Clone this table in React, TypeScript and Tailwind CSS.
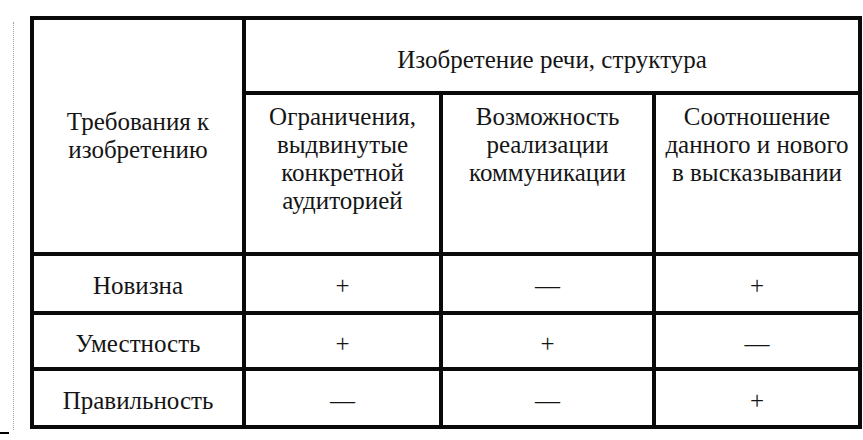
import {FC, ReactNode, Fragment} from "react";

const Cell: FC<{ className?: string; children?: ReactNode }> = ({className = "", children}) => (
    <div className={`bg-white flex justify-center text-center ${className}`}>{children}</div>
);

const rows = [
    {name: "Новизна", values: ["+", "—", "+"]},
    {name: "Уместность", values: ["+", "+", "—"]},
    {name: "Правильность", values: ["—", "—", "+"]},
];

export default function App() {
    return (
        <div
            className="w-[863px] h-[440px] bg-white flex text-[#151515] text-[25px] leading-[28px] font-['Liberation_Serif','Times_New_Roman',serif]">
            {/* left margin marks */}
            <div className="w-[30px] flex flex-col pt-[22px] pb-[6px]">
                <div className="flex-1 ml-[13px] border-l border-dotted border-gray-400"/>
                <div className="h-[2px] w-[9px] bg-black mt-[2px]"/>
            </div>

            {/* table */}
            <div className="mt-[16px] self-start">
                <div
                    className="grid bg-[#0a0a0a] p-[4px] gap-[4px] grid-cols-[208px_193px_209px_202px] grid-rows-[71px_157px_55px_52px_54px]">
                    <Cell className="row-span-2 items-center">
                        <div>Требования к<br/>изобретению</div>
                    </Cell>
                    <Cell className="col-span-3 items-center pt-[9px]">Изобретение речи, структура</Cell>
                    <Cell className="pt-[8px]">
                        <div>Ограничения,<br/>выдвинутые<br/>конкретной<br/>аудиторией</div>
                    </Cell>
                    <Cell className="pt-[8px]">
                        <div>Возможность<br/>реализации<br/>коммуникации</div>
                    </Cell>
                    <Cell className="pt-[8px]">
                        <div>Соотношение<br/>данного и нового<br/>в высказывании</div>
                    </Cell>
                    {rows.map((r) => (
                        <Fragment key={r.name}>
                            <Cell className="items-center pt-[5px]">{r.name}</Cell>
                            {r.values.map((v, i) => (
                                <Cell key={i} className="items-center pt-[5px]">{v}</Cell>
                            ))}
                        </Fragment>
                    ))}
                </div>
            </div>
        </div>
    );
}
